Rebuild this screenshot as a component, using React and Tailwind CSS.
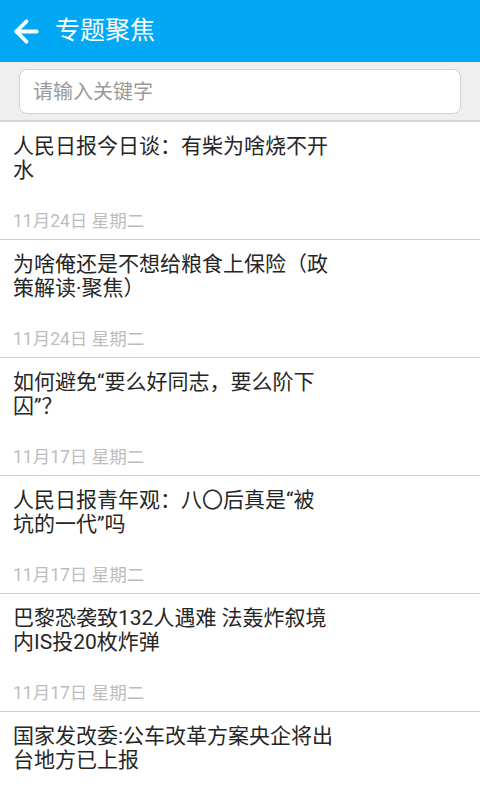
import React from 'react';
import { ArrowLeft } from 'lucide-react';

const items = [
  { lines: ['人民日报今日谈：有柴为啥烧不开', '水'], date: '11月24日 星期二' },
  { lines: ['为啥俺还是不想给粮食上保险（政', '策解读·聚焦）'], date: '11月24日 星期二' },
  { lines: ['如何避免“要么好同志，要么阶下', '囚”？'], date: '11月17日 星期二' },
  { lines: ['人民日报青年观：八〇后真是“被', '坑的一代”吗'], date: '11月17日 星期二' },
  { lines: ['巴黎恐袭致132人遇难 法轰炸叙境', '内IS投20枚炸弹'], date: '11月17日 星期二' },
  { lines: ['国家发改委:公车改革方案央企将出', '台地方已上报'], date: '11月17日 星期二' },
];

function NewsItem({ item }) {
  return (
    <div className="bg-white border-b border-[#cfcfcf] pl-[13px] pt-[12px] pb-[8px]">
      <div className="text-[21px] leading-[24px] text-[#262626] whitespace-nowrap">
        {item.lines.map((line) => (
          <div key={line}>{line}</div>
        ))}
      </div>
      <div className="mt-[29px] text-[17.5px] leading-[20px] text-[#bdbdbd]">{item.date}</div>
    </div>
  );
}

export default function App() {
  return (
    <div
      className="w-[480px] h-[800px] overflow-hidden bg-white"
      style={{ fontFamily: 'Roboto, "Noto Sans CJK SC", sans-serif' }}
    >
      {/* Header */}
      <div className="h-[62px] bg-[#02a8f3] flex items-center pl-[9px]">
        <ArrowLeft className="w-[35px] h-[35px] text-white" strokeWidth={2.6} />
        <span className="ml-[11px] text-[25px] text-white">专题聚焦</span>
      </div>

      {/* Search */}
      <div className="bg-[#efefef] pt-[7px] pb-[6px] px-[19px] border-b-2 border-[#d6d6d6]">
        <div className="h-[45px] bg-white border border-[#d2d2d2] rounded-[8px] flex items-center pl-[13px]">
          <span className="text-[20px] text-[#9a9a9a]">请输入关键字</span>
        </div>
      </div>

      {/* List */}
      <div>
        {items.map((item, i) => (
          <NewsItem key={i} item={item} />
        ))}
      </div>
    </div>
  );
}
